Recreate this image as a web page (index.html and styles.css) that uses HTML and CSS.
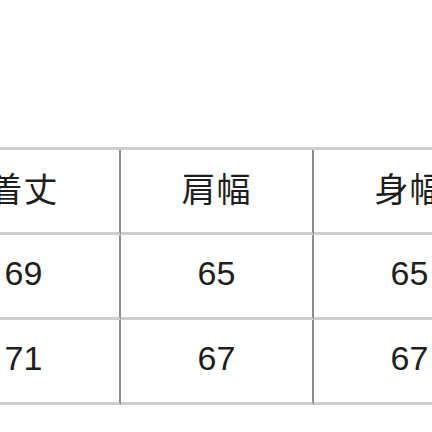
FILE: index.html
```html
<!DOCTYPE html>
<html lang="ja">
<head>
<meta charset="utf-8">
<link rel="stylesheet" href="styles.css">
</head>
<body>
<div class="page">
  <div class="size-table">
    <div class="cell head">着丈</div>
    <div class="cell head">肩幅</div>
    <div class="cell head">身幅</div>
    <div class="cell num">69</div>
    <div class="cell num">65</div>
    <div class="cell num">65</div>
    <div class="cell num">71</div>
    <div class="cell num">67</div>
    <div class="cell num">67</div>
  </div>
</div>
</body>
</html>
```
FILE: styles.css
```css
html, body {
  margin: 0;
  padding: 0;
  background: #ffffff;
}
.page {
  width: 432px;
  height: 432px;
  overflow: hidden;
  padding-top: 147px;
  box-sizing: border-box;
}
.size-table {
  display: grid;
  grid-template-columns: 193px 193px 193px;
  grid-auto-rows: 85px;
  margin-left: -72px;
  width: 579px;
  border-top: 3px solid #cdcdcd;
}
.cell {
  box-sizing: border-box;
  display: flex;
  align-items: center;
  justify-content: center;
  border-bottom: 3px solid #cdcdcd;
  border-right: 2px solid #8c8c8c;
  color: #1e1e1e;
  padding-bottom: 5px;
}
.head {
  font-family: "Noto Sans CJK JP", "Noto Sans", sans-serif;
  font-size: 34px;
  letter-spacing: 1px;
  padding-bottom: 8px;
}
.num {
  font-family: "Liberation Sans", Arial, sans-serif;
  font-size: 34px;
  padding-bottom: 6px;
}
```
